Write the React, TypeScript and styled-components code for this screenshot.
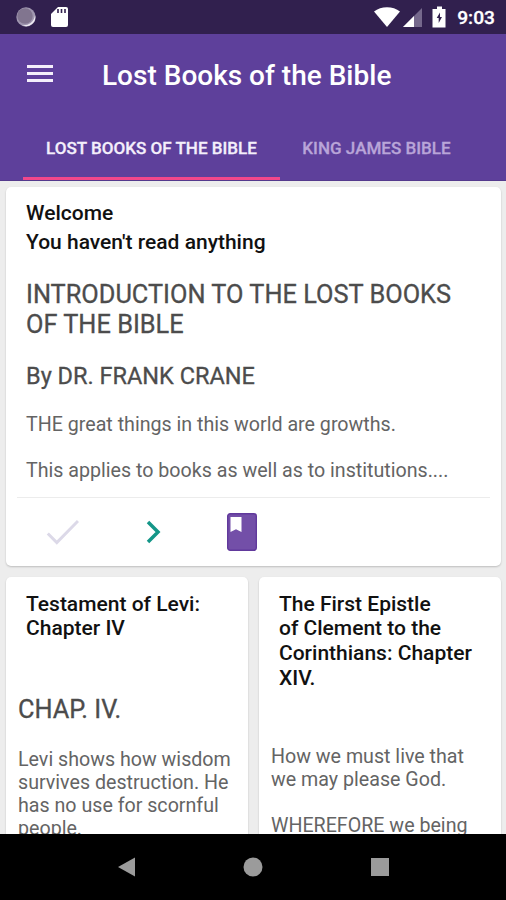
import React from "react";
import styled, { createGlobalStyle } from "styled-components";

const GlobalStyle = createGlobalStyle`
  * { box-sizing: border-box; }
  body { margin: 0; background: #000; }
  svg { display: block; flex: none; }
`;

const Screen = styled.div`
  width: 506px;
  height: 900px;
  display: flex;
  flex-direction: column;
  overflow: hidden;
  background: #ededed;
  font-family: Roboto, sans-serif;
`;

const StatusBar = styled.div`
  height: 34px;
  flex: none;
  display: flex;
  align-items: center;
  padding: 0 11px 0 16px;
  background: #31204e;
  color: #fff;
`;

const StatusIcons = styled.div`
  display: flex;
  align-items: center;
  gap: 15px;
  flex: 1;
`;

const Clock = styled.span`
  margin: 2px 0 0 10px;
  font-size: 19.2px;
  font-weight: 500;
  line-height: 36px;
  -webkit-text-stroke: 0.3px #fff;
`;

const AppBar = styled.header`
  flex: none;
  height: 147px;
  display: flex;
  flex-direction: column;
  background: #5e409b;
  border-bottom: 1px solid #543a8d;
`;

const Toolbar = styled.div`
  height: 80px;
  display: flex;
  align-items: center;
  padding-left: 27px;
`;

const AppTitle = styled.h1`
  margin: 3px 0 0 49px;
  color: #fff;
  font-size: 28px;
  font-weight: 500;
  line-height: 32px;
  white-space: nowrap;
`;

const Tabs = styled.nav`
  flex: 1;
  display: flex;
  padding-left: 23px;
`;

const Tab = styled.div<{ $active?: boolean }>`
  width: ${(p) => (p.$active ? 257 : 193)}px;
  padding-top: 22px;
  text-align: center;
  white-space: nowrap;
  font-size: 17.05px;
  font-weight: 500;
  line-height: 24px;
  color: ${(p) => (p.$active ? "#f4effb" : "#b9a5d8")};
  -webkit-text-stroke: 0.3px ${(p) => (p.$active ? "#f4effb" : "#b9a5d8")};
  border-bottom: 3px solid ${(p) => (p.$active ? "#f2478a" : "transparent")};
`;

const Feed = styled.main`
  height: 653px;
  flex: none;
  overflow: hidden;
  padding: 6px 5px 0 6px;
  display: flex;
  flex-direction: column;
  gap: 11px;
`;

const Card = styled.article`
  background: #fff;
  border-radius: 5px;
  box-shadow: 0 1px 2px rgba(0, 0, 0, 0.2);
`;

const WelcomeCard = styled(Card)`
  height: 379px;
  flex: none;
  display: flex;
  flex-direction: column;
`;

const CardPair = styled.div`
  display: grid;
  grid-template-columns: 242px 242px;
  gap: 11px;
`;

const ChapterCard = styled(Card)`
  height: 300px;
  padding: 14.5px 11px 0 12px;
`;

const Greeting = styled.div`
  padding: 12px 20px 0;
  font-size: 21px;
  font-weight: 500;
  line-height: 28.5px;
  color: #111;
  white-space: nowrap;
`;

const Article = styled.div`
  flex: 1;
  min-height: 0;
  margin: 0 11px;
  padding: 23px 9px 0;
  border-bottom: 1px solid #ececec;
`;

const Heading = styled.h2<{ $size: number; $gap: number }>`
  margin: 0 0 ${(p) => p.$gap}px;
  font-size: ${(p) => p.$size}px;
  font-weight: 400;
  line-height: 30px;
  color: #4c4c4c;
  -webkit-text-stroke: 0.3px #4c4c4c;
  white-space: pre-line;
`;

const Body = styled.p`
  margin: 0 0 23px;
  font-size: 19.65px;
  line-height: 23px;
  color: #646464;
  white-space: pre;

  &:last-child {
    margin-bottom: 0;
  }
`;

const Actions = styled.div`
  height: 68px;
  flex: none;
  display: flex;
  align-items: center;
  padding-left: 39px;
`;

const Action = styled.div<{ $width: number }>`
  width: ${(p) => p.$width}px;
`;

const ChapterTitle = styled.h3<{ $height: number }>`
  margin: 0;
  height: ${(p) => p.$height}px;
  padding-left: 8px;
  font-size: 21px;
  font-weight: 500;
  line-height: 24.8px;
  color: #111;
  white-space: pre;
`;

const NavBar = styled.footer`
  height: 66px;
  flex: none;
  display: grid;
  grid-template-columns: repeat(3, 126.5px);
  justify-content: center;
  justify-items: center;
  align-items: center;
  background: #000;
`;

export default function App() {
  return (
    <>
      <GlobalStyle />
      <Screen>
        <StatusBar>
          <StatusIcons>
            <svg width="20" height="22" viewBox="0 0 20 22">
              <circle cx="10" cy="11" r="9.7" fill="#a097b0" />
              <circle cx="9" cy="10" r="7.7" fill="#81758f" />
              <path d="M19 9a9 9 0 0 1-13 10 11 11 0 0 0 13-10z" fill="#eeeaf3" />
            </svg>
            <svg width="18" height="22" viewBox="0 0 18 22">
              <path d="M7 1h8a2 2 0 0 1 2 2v16a2 2 0 0 1-2 2H2a2 2 0 0 1-2-2V8z" fill="#fff" />
              <path d="M7 3v4M10.500 3v4M14 3v4" stroke="#31204e" strokeWidth="1.600" />
            </svg>
          </StatusIcons>
          <svg width="28" height="22" viewBox="0 0 28 22">
            <path d="M0 5.500C7-.2 19-.2 26 5.500L13 21z" fill="#fff" />
          </svg>
          <svg width="21" height="22" viewBox="0 0 21 22">
            <path d="M20 2v19H1z" fill="#75688c" />
            <path d="M12 10V21H1z" fill="#fff" />
          </svg>
          <svg width="24" height="22" viewBox="0 0 24 22">
            <path d="M14 .5h5v2.500h3.500v18.500h-13V3H14z" fill="#fff" />
            <path d="M17 6.500l-3.300 5.500h2v5l3.300-6h-2z" fill="#31204e" />
          </svg>
          <Clock>9:03</Clock>
        </StatusBar>
        <AppBar>
          <Toolbar>
            <svg width="26" height="20" viewBox="0 0 26 20">
              <path d="M0 2.500h26M0 9.500h26M0 16.500h26" stroke="#f4effb" strokeWidth="3" />
            </svg>
            <AppTitle>Lost Books of the Bible</AppTitle>
          </Toolbar>
          <Tabs>
            <Tab $active>LOST BOOKS OF THE BIBLE</Tab>
            <Tab>KING JAMES BIBLE</Tab>
          </Tabs>
        </AppBar>
        <Feed>
          <WelcomeCard>
            <Greeting>
              <div>Welcome</div>
              <div>You haven't read anything</div>
            </Greeting>
            <Article>
              <Heading $size={25.35} $gap={22}>
                {"INTRODUCTION TO THE LOST BOOKS\nOF THE BIBLE"}
              </Heading>
              <Heading $size={23.5} $gap={22}>
                By DR. FRANK CRANE
              </Heading>
              <Body>THE great things in this world are growths.</Body>
              <Body>This applies to books as well as to institutions....</Body>
            </Article>
            <Actions>
              <Action $width={101}>
                <svg width="34" height="26" viewBox="0 0 34 26">
                  <path d="M2.800 14.500L11.800 23.500L33 2" fill="none" stroke="#dcd9e8" strokeWidth="3" />
                </svg>
              </Action>
              <Action $width={81}>
                <svg width="15" height="24" viewBox="0 0 15 24">
                  <path d="M2 2L12 12L2 22" fill="none" stroke="#149688" strokeWidth="3.500" />
                </svg>
              </Action>
              <svg width="30" height="38" viewBox="0 0 30 38">
                <rect x=".7" y=".7" width="28.600" height="36.600" rx="2.500" fill="#734fa8" stroke="#61399c" strokeWidth="1.400" />
                <path d="M3.500 4h11v15l-5.500-2.700L3.500 19z" fill="#fff" />
              </svg>
            </Actions>
          </WelcomeCard>
          <CardPair>
            <ChapterCard>
              <ChapterTitle $height={102.5}>{"Testament of Levi:\nChapter IV"}</ChapterTitle>
              <Heading $size={25.35} $gap={24}>CHAP. IV.</Heading>
              <Body>{"Levi shows how wisdom\nsurvives destruction. He\nhas no use for scornful\npeople."}</Body>
            </ChapterCard>
            <ChapterCard>
              <ChapterTitle $height={153.5}>{"The First Epistle\nof Clement to the\nCorinthians: Chapter\nXIV."}</ChapterTitle>
              <Body>{"How we must live that\nwe may please God."}</Body>
              <Body>WHEREFORE we being</Body>
            </ChapterCard>
          </CardPair>
        </Feed>
        <NavBar>
          <svg width="18" height="20" viewBox="0 0 18 20">
            <path d="M0 10L17 .5v19z" fill="#9b9b9b" />
          </svg>
          <svg width="20" height="20" viewBox="0 0 20 20">
            <circle cx="10" cy="10" r="9.500" fill="#9b9b9b" />
          </svg>
          <svg width="18" height="18" viewBox="0 0 18 18">
            <rect width="18" height="18" fill="#9b9b9b" />
          </svg>
        </NavBar>
      </Screen>
    </>
  );
}
